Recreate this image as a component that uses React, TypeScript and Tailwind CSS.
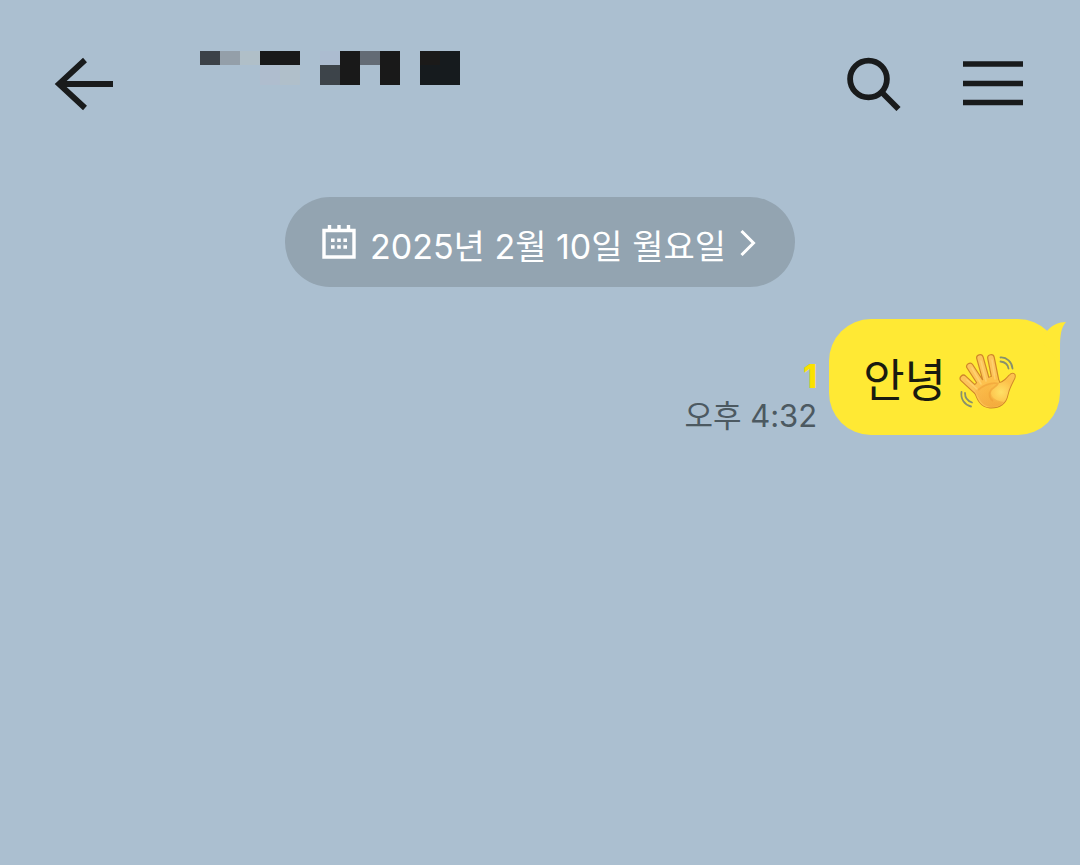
interface MessageProps {
  text: string;
  time: string;
  unread: number;
}

const BackIcon = () => (
  <svg width="60" height="54" viewBox="0 0 60 54" fill="none" stroke="#191b1c" strokeWidth="5.8">
    <path d="M31 3 5 27l26 24" />
    <path d="M7 27h52" />
  </svg>
);

const SearchIcon = () => (
  <svg width="56" height="54" viewBox="0 0 56 54" fill="none" stroke="#191b1c" strokeWidth="5.8">
    <circle cx="22.5" cy="22" r="18.4" />
    <path d="M35.500 35 52.500 52" />
  </svg>
);

const MenuIcon = () => (
  <svg width="60" height="46" viewBox="0 0 60 46" fill="none" stroke="#191b1c" strokeWidth="5.6">
    <path d="M0 3h60M0 22.500h60M0 41.500h60" />
  </svg>
);

const CalendarIcon = () => (
  <svg width="34" height="34" viewBox="0 0 34 34" fill="none" stroke="white">
    <path d="M2 5.500h30v26.500H2z" strokeWidth="3.4" />
    <path d="M7.500 0v5M17 0v5M26.500 0v5" strokeWidth="3.4" />
    <path d="M9 15.200h16M9 22h16" strokeWidth="3.6" strokeDasharray="3.600 2.600" />
  </svg>
);

const ChevronIcon = () => (
  <svg width="16" height="28" viewBox="0 0 16 28" fill="none" stroke="white" strokeWidth="3">
    <path d="M1.500 3l12 12-12 12" />
  </svg>
);

// pixelated contact name
const HiddenName = () => (
  <svg width="260" height="34" viewBox="0 0 260 34" shapeRendering="crispEdges">
    <path d="M0 0h20v14H0z" fill="#3c4248" />
    <path d="M20 0h20v14H20z" fill="#949fa9" />
    <path d="M40 0h20v14H40z" fill="#b0bfc8" />
    <path d="M60 0h40v14H60z" fill="#191919" />
    <path d="M60 14h20v20H60z" fill="#afbdce" />
    <path d="M80 14h20v20H80z" fill="#b0bfca" />
    <path d="M120 0h20v14h-20z" fill="#acbcd0" />
    <path d="M120 14h20v20h-20z" fill="#3d444a" />
    <path d="M140 0h20v34h-20zM180 0h20v34h-20z" fill="#191919" />
    <path d="M160 0h20v14h-20z" fill="#636b75" />
    <path d="M220 0h20v14h-20z" fill="#1b1a19" />
    <path d="M240 0h20v34h-40V14h20z" fill="#161b1e" />
  </svg>
);

const FINGERS = "M5.500 27.500 20 41M12 15.500 24 34M22 7 29 32M33 7 38 32";
const PALM =
  "M15 36C19 46 21 56 32 56.500C42 57 48 52 49.500 44C51 37 54 32 56.500 27C58 22 54 21.500 51.500 24.500C48 28 46 31 41.500 32L38 24L20 31Z";

const WaveEmoji = () => (
  <svg width="60" height="60" viewBox="0 0 60 60" role="img" aria-label="👋">
    <defs>
      <radialGradient id="skin" gradientUnits="userSpaceOnUse" cx="43" cy="41" r="36">
        <stop offset="0" stopColor="#ffe066" />
        <stop offset="0.35" stopColor="#fdc04a" />
        <stop offset="1" stopColor="#fdc45a" />
      </radialGradient>
      <linearGradient id="shade" x1="0" y1="0" x2="0.3" y2="1">
        <stop offset="0" stopColor="#ef9d35" stopOpacity="0.1" />
        <stop offset="1" stopColor="#e88f2b" stopOpacity="0.4" />
      </linearGradient>
    </defs>
    <g stroke="#d0862a" strokeLinecap="round" strokeLinejoin="round">
      <path d={FINGERS} strokeWidth="7.8" />
      <path d={PALM} fill="#d0862a" strokeWidth="1.8" />
    </g>
    <path d={FINGERS} stroke="#fdc45a" strokeWidth="5.4" strokeLinecap="round" />
    <path d={PALM} fill="url(#skin)" />
    <path d="M17 40C22 35 31 31 40 32C41 34 38 36 34 39C31 43 35 50 46 51C39 59 26 57 22 49Z" fill="url(#shade)" />
    <path d="M20 39C26 34 33 31 40 32.500C39 35 35 36 33 39C30 43 32 48 35 50" fill="none" stroke="#ec9a34" strokeWidth="1.800" opacity="0.45" />
    <path d="M9 29 19 38M14 17 23 33M23 10 28 30M34 9 37 28" stroke="#ffdb7d" strokeWidth="1.600" strokeLinecap="round" opacity="0.6" />
    <g fill="none" stroke="#87906c" strokeWidth="1.800" strokeLinecap="round">
      <path d="M42.500 6.500C48.500 6 54 11 54.500 17.500" />
      <path d="M42.500 10.500C47 11 50 13.500 50.500 17.500" />
      <path d="M3.500 41C2.500 48 6.500 54 13 55.500" />
      <path d="M7 42C7 46 9.500 50 14 51.500" />
    </g>
  </svg>
);

const Header = () => {
  return (
    <header className="flex items-center pt-[51px] pr-[57px] pl-[54px]">
      <button type="button" aria-label="뒤로" className="mt-1.5">
        <BackIcon />
      </button>
      <div className="ml-[86px] flex-1 self-start">
        <HiddenName />
      </div>
      <div className="mt-1.5 flex items-center gap-[61px]">
        <button type="button" aria-label="검색">
          <SearchIcon />
        </button>
        <button type="button" aria-label="메뉴">
          <MenuIcon />
        </button>
      </div>
    </header>
  );
};

const Message = ({ text, time, unread }: MessageProps) => {
  return (
    <div className="mt-8 flex items-end justify-end gap-3 pr-5">
      <div className="flex flex-col items-end">
        <span className="text-[32px] leading-10 font-extrabold text-[#fae100]">
          {unread}
        </span>
        <time className="text-[31px] leading-[38px] text-[#4c5961]">{time}</time>
      </div>
      <div className="relative flex items-center gap-3 rounded-[42px] bg-[#ffe934] pt-8 pr-[42px] pb-6 pl-[34px]">
        <p className="text-[45px] leading-[60px] text-[#191b10]">{text}</p>
        <WaveEmoji />
        <svg
          width="26"
          height="44"
          viewBox="0 0 26 44"
          className="absolute top-0 -right-1.5"
        >
          <path d="M7 12C12 6 19 3 26 3C21 9 20 16 20 30V44L3 24Z" fill="#ffe934" />
        </svg>
      </div>
    </div>
  );
};

export default function App() {
  return (
    <div className="min-h-screen bg-[#abbfd0] font-[Inter,'Noto_Sans_CJK_KR',sans-serif]">
      <Header />
      <main className="pt-[86px]">
        <button
          type="button"
          className="mx-auto flex items-center gap-[14px] rounded-full bg-[#93a4b1] pr-[39px] pl-[37px] text-white"
        >
          <CalendarIcon />
          <span className="pt-2.5 text-[34px] leading-[80px]">2025년 2월 10일 월요일</span>
          <ChevronIcon />
        </button>
        <Message text="안녕" time="오후 4:32" unread={1} />
      </main>
    </div>
  );
}
